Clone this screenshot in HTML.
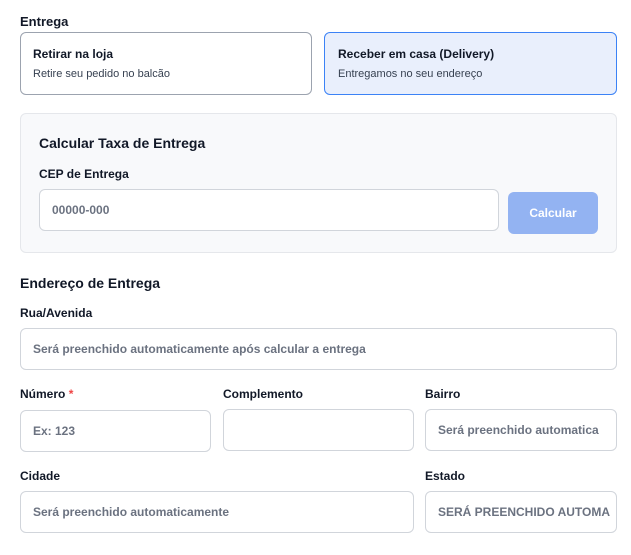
<!DOCTYPE html>
<html><head><meta charset="utf-8"><style>
*{box-sizing:border-box;margin:0;padding:0}
body{width:631px;height:555px;background:#fff;font-family:"Liberation Sans",sans-serif;color:#111827;position:relative;overflow:hidden}
.a{position:absolute;white-space:nowrap}
.b{font-weight:bold}
.inp{position:absolute;border:1px solid #d1d5db;border-radius:6px;background:#fff;height:42px;overflow:hidden;font-size:12px;font-weight:bold;color:#6b7280;padding:0 12px;line-height:41px;white-space:nowrap}
.lbl{position:absolute;font-size:12px;font-weight:bold;white-space:nowrap}
</style></head><body>
<div class="a b" style="left:20px;top:14px;font-size:13px">Entrega</div>
<div class="a" style="left:20px;top:32px;width:292px;height:63px;border:1px solid #9ca3af;border-radius:6px"></div>
<div class="a b" style="left:33px;top:47px;font-size:12px">Retirar na loja</div>
<div class="a" style="left:33px;top:68px;font-size:11px;color:#374151">Retire seu pedido no balcão</div>
<div class="a" style="left:324px;top:32px;width:293px;height:63px;border:1px solid #3b82f6;border-radius:6px;background:#e9effc"></div>
<div class="a b" style="left:338px;top:47px;font-size:12px">Receber em casa (Delivery)</div>
<div class="a" style="left:338px;top:68px;font-size:11px;color:#374151">Entregamos no seu endereço</div>

<div class="a" style="left:20px;top:113px;width:597px;height:140px;border:1px solid #e5e7eb;border-radius:6px;background:#f8f9fb"></div>
<div class="a b" style="left:39px;top:135px;font-size:14px">Calcular Taxa de Entrega</div>
<div class="lbl" style="left:39px;top:167px">CEP de Entrega</div>
<div class="inp" style="left:39px;top:189px;width:460px">00000-000</div>
<div class="a b" style="left:508px;top:192px;width:90px;height:42px;border-radius:6px;background:#93b3f2;color:#fff;font-size:12px;text-align:center;line-height:42px">Calcular</div>

<div class="a b" style="left:20px;top:275px;font-size:14px">Endereço de Entrega</div>
<div class="lbl" style="left:20px;top:306px">Rua/Avenida</div>
<div class="inp" style="left:20px;top:328px;width:597px">Será preenchido automaticamente após calcular a entrega</div>

<div class="lbl" style="left:20px;top:387px">Número <span style="color:#ef4444">*</span></div>
<div class="lbl" style="left:223px;top:387px">Complemento</div>
<div class="lbl" style="left:425px;top:387px">Bairro</div>
<div class="inp" style="left:20px;top:410px;width:191px">Ex: 123</div>
<div class="inp" style="left:223px;top:409px;width:191px"></div>
<div class="inp" style="left:425px;top:409px;width:192px">Será preenchido automatica</div>

<div class="lbl" style="left:20px;top:469px">Cidade</div>
<div class="lbl" style="left:425px;top:469px">Estado</div>
<div class="inp" style="left:20px;top:491px;width:394px">Será preenchido automaticamente</div>
<div class="inp" style="left:425px;top:491px;width:192px">SERÁ PREENCHIDO AUTOMA</div>
</body></html>
